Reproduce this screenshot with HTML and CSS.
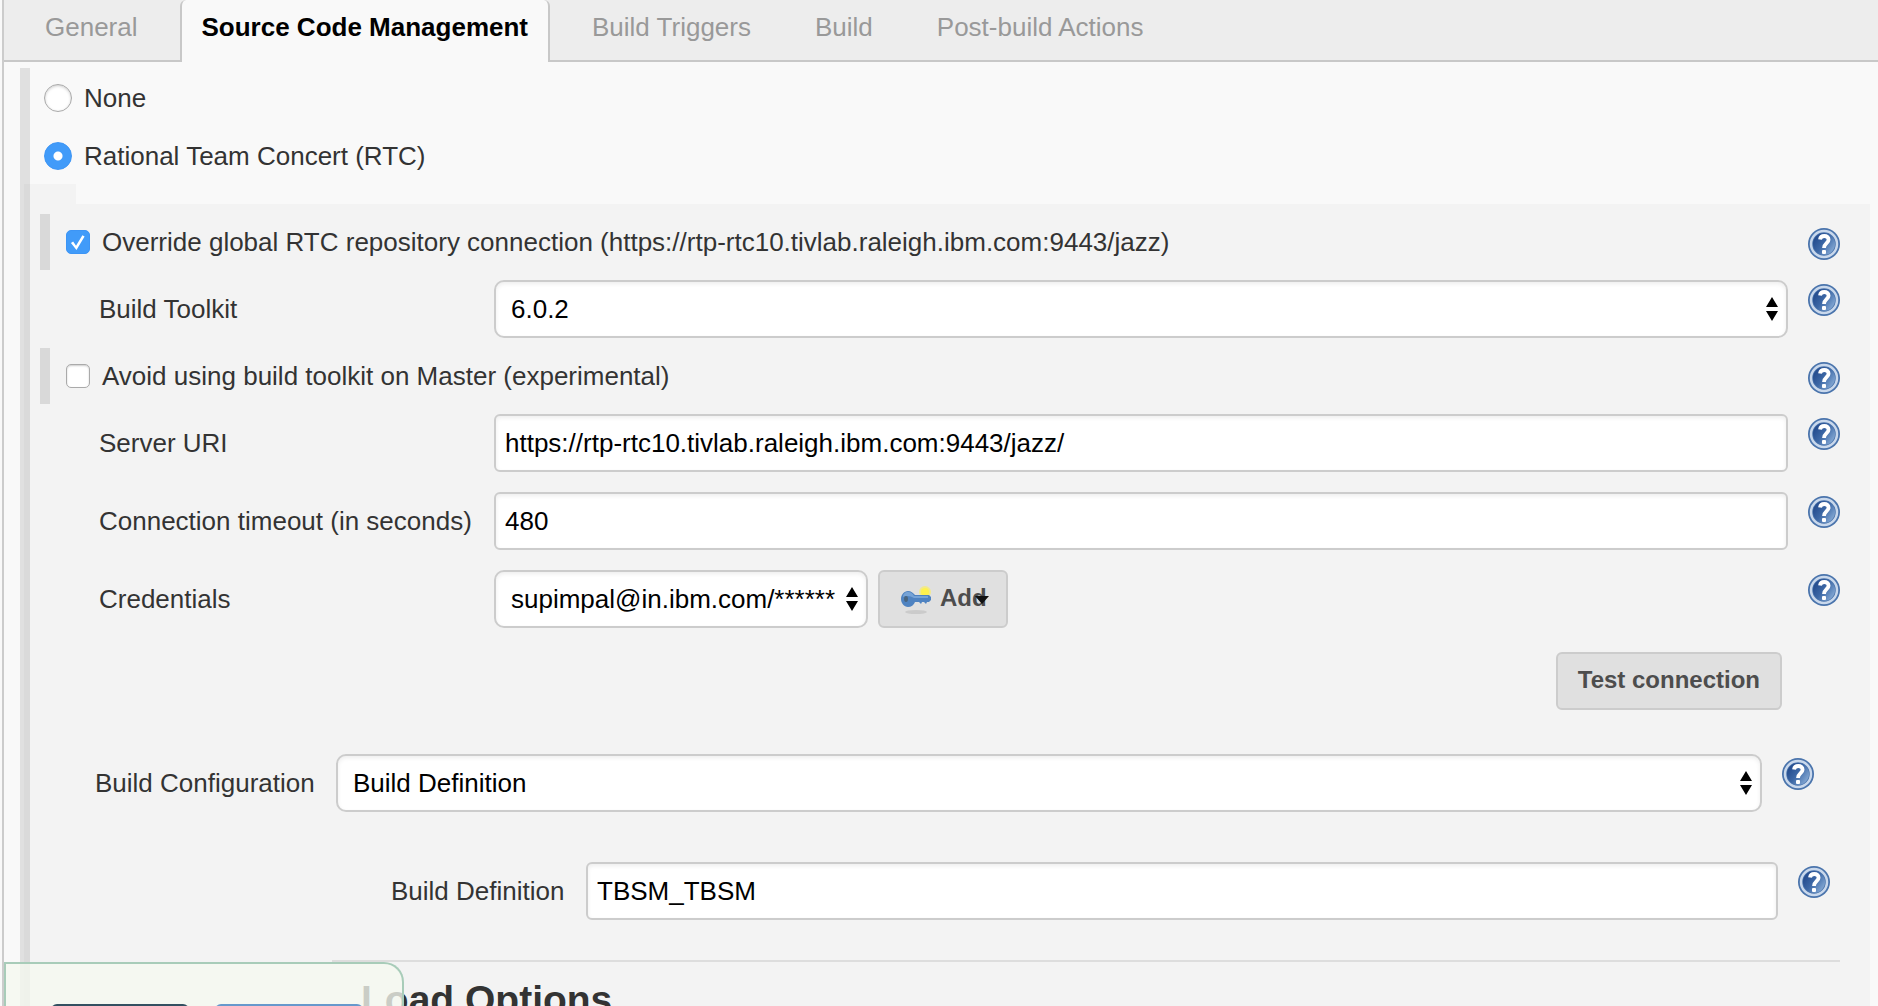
FILE: index.html
```html
<!DOCTYPE html>
<html lang="en">
<head>
<meta charset="utf-8">
<title>Job configuration</title>
<link rel="stylesheet" href="styles.css">
</head>
<body>
<svg class="defs" aria-hidden="true">
  <defs>
    <linearGradient id="disc" x1="0" y1="0.2" x2="1" y2="0.9">
      <stop offset="0" stop-color="#20478a"/>
      <stop offset="0.45" stop-color="#3d68a6"/>
      <stop offset="1" stop-color="#91b4dc"/>
    </linearGradient>
    <symbol id="help" viewBox="0 0 32 32">
      <circle cx="16" cy="16" r="16" fill="#4a74ac"/>
      <circle cx="16" cy="16" r="13" fill="none" stroke="#c9d8ec" stroke-width="2.500"/>
      <circle cx="16" cy="16" r="11" fill="url(#disc)"/>
      <path d="M12 11.5C12.4 9 14.2 8 16.3 8c2.6 0 4.3 1.500 4.300 3.700 0 3.400-4.600 3.600-4.600 8.300" fill="none" stroke="#fff" stroke-width="3.800"/>
      <rect x="14" y="22" width="4" height="4" rx="1" fill="#fff"/>
    </symbol>
    <symbol id="arrows" viewBox="0 0 12 24">
      <path d="M6 0l6 10H0zM0 14h12L6 24z" fill="#000"/>
    </symbol>
  </defs>
</svg>
<main class="config">
  <nav class="tabs">
    <a class="tab tab-first" href="#general">General</a>
    <a class="tab tab-active" href="#scm">Source Code Management</a>
    <a class="tab tab-after" href="#triggers">Build Triggers</a>
    <a class="tab" href="#build">Build</a>
    <a class="tab" href="#post">Post-build Actions</a>
  </nav>
  <form class="section" id="scm">
    <div class="choices">
      <label class="choice"><input class="radio" type="radio" name="scm"><span>None</span></label>
      <label class="choice"><input class="radio" type="radio" name="scm" checked><span>Rational Team Concert (RTC)</span></label>
    </div>
    <div class="notch"></div>
    <div class="panel">
      <div class="toggle-row">
        <label class="toggle"><input class="check" type="checkbox" checked><span>Override global RTC repository connection (https://rtp-rtc10.tivlab.raleigh.ibm.com:9443/jazz)</span></label>
        <a class="help" href="#help" aria-label="Help"><svg><use href="#help"/></svg></a>
      </div>
      <div class="row">
        <label class="label" for="toolkit">Build Toolkit</label>
        <div class="picker grow">
          <select class="select" id="toolkit"><option>6.0.2</option></select>
          <svg class="arrows" aria-hidden="true"><use href="#arrows"/></svg>
        </div>
        <a class="help" href="#help" aria-label="Help"><svg><use href="#help"/></svg></a>
      </div>
      <div class="toggle-row">
        <label class="toggle"><input class="check" type="checkbox"><span>Avoid using build toolkit on Master (experimental)</span></label>
        <a class="help" href="#help" aria-label="Help"><svg><use href="#help"/></svg></a>
      </div>
      <div class="rows">
        <div class="row">
          <label class="label" for="uri">Server URI</label>
          <input class="text grow" id="uri" type="text" value="https://rtp-rtc10.tivlab.raleigh.ibm.com:9443/jazz/">
          <a class="help" href="#help" aria-label="Help"><svg><use href="#help"/></svg></a>
        </div>
        <div class="row">
          <label class="label" for="timeout">Connection timeout (in seconds)</label>
          <input class="text grow" id="timeout" type="text" value="480">
          <a class="help" href="#help" aria-label="Help"><svg><use href="#help"/></svg></a>
        </div>
        <div class="row">
          <label class="label" for="credentials">Credentials</label>
          <div class="credentials grow">
            <div class="picker">
              <select class="select select-short" id="credentials"><option>supimpal@in.ibm.com/******</option></select>
              <svg class="arrows" aria-hidden="true"><use href="#arrows"/></svg>
            </div>
            <button class="button add" type="button">
              <svg class="key" viewBox="0 0 32 32" aria-hidden="true">
                <ellipse cx="16" cy="28" rx="11" ry="2" fill="#cbcbcb"/>
                <circle cx="25" cy="8" r="6" fill="#f1e98d"/>
                <circle cx="25" cy="8" r="4" fill="#fff24e"/>
                <path d="M8 7c3 0 5 2 7 4h14l2 2v3l-2 2h-2l-1 2-2-2h-2l-1 2-2-2h-4c-1 3-4 5-7 5-4 0-7-4-7-8s3-8 7-8z" fill="#4f83c1"/>
                <path d="M8 8c3 0 5 2 6 4h14v2H14c-3-2-8-3-11-1 0-3 2-5 5-5z" fill="#76a3d6"/>
                <ellipse cx="6" cy="15" rx="2" ry="3" fill="#49657f"/>
              </svg>
              <span>Add</span>
              <svg class="caret" viewBox="0 0 14 8" aria-hidden="true"><path d="M0 0h14L7 8z" fill="#111"/></svg>
            </button>
          </div>
          <a class="help" href="#help" aria-label="Help"><svg><use href="#help"/></svg></a>
        </div>
      </div>
      <div class="actions"><button class="button" type="button">Test connection</button></div>
      <div class="row configuration">
        <label class="label" for="configuration">Build Configuration</label>
        <div class="picker grow">
          <select class="select" id="configuration"><option>Build Definition</option></select>
          <svg class="arrows" aria-hidden="true"><use href="#arrows"/></svg>
        </div>
        <a class="help" href="#help" aria-label="Help"><svg><use href="#help"/></svg></a>
      </div>
      <div class="row definition">
        <label class="label" for="definition">Build Definition</label>
        <input class="text grow" id="definition" type="text" value="TBSM_TBSM">
        <a class="help" href="#help" aria-label="Help"><svg><use href="#help"/></svg></a>
      </div>
      <section class="load">
        <h2 class="heading">Load Options</h2>
      </section>
    </div>
  </form>
</main>
<div class="save-bar">
  <button class="save" type="button" aria-label="Save"></button>
  <button class="apply" type="button" aria-label="Apply"></button>
</div>
</body>
</html>
```

FILE: styles.css
```css
* { box-sizing: border-box; }

body {
  margin: 0;
  height: 100vh;
  overflow: hidden;
  background: #f9f9f9;
  color: #333;
  font: 26px/30px "Liberation Sans", Arial, sans-serif;
}

input, select, button { margin: 0; font: inherit; }

.defs { position: absolute; width: 0; height: 0; }

.config {
  min-height: 100vh;
  margin-left: 2px;
  border-left: 2px solid #ccc;
}

/* Tabs */
.tabs {
  display: flex;
  height: 62px;
  background: #ededed;
  box-shadow: inset 0 -2px #c8c8c8;
}
.tab {
  padding: 12px 32px 0;
  color: #999;
  text-decoration: none;
}
.tab-first { padding: 12px 42px 0 41px; }
.tab-after { padding-left: 42px; }
.tab-active {
  padding: 12px 20px 0;
  border: solid #c8c8c8;
  border-width: 0 2px;
  border-radius: 6px 6px 0 0;
  background: #f9f9f9;
  color: #000;
  font-weight: bold;
}

/* Section */
.section {
  margin: 6px 8px 0 16px;
  background: linear-gradient(#e0e0e0, #e0e0e0) 0 0 / 10px 100% no-repeat;
}
.choices {
  display: flex;
  flex-direction: column;
  gap: 28px;
  padding: 15px 0 13px 24px;
}
.choice { display: flex; align-items: center; gap: 12px; }
.radio {
  width: 28px;
  height: 28px;
  margin: 1px 0;
  appearance: none;
  border: 1px solid #aaa;
  border-radius: 50%;
  background: #fff;
  box-shadow: inset 0 1px 3px #ccc;
}
.radio:checked {
  border-color: #3d95f5;
  background: radial-gradient(circle, #fff 4px, #419bf9 5px);
  box-shadow: none;
}
.notch {
  width: 52px;
  height: 20px;
  margin-left: 4px;
  background: rgba(0, 0, 0, 0.024);
}
.panel {
  margin-left: 4px;
  padding: 10px 30px 80px 16px;
  background: rgba(0, 0, 0, 0.024);
}

/* Rows */
.toggle-row {
  display: flex;
  align-items: center;
  justify-content: space-between;
  height: 56px;
  margin-bottom: 10px;
  padding-left: 16px;
  border-left: 10px solid #d9d9d9;
}
.toggle { display: flex; align-items: center; gap: 12px; }
.check {
  width: 24px;
  height: 24px;
  appearance: none;
  border: 1px solid #aaa;
  border-radius: 5px;
  background: #fff;
  box-shadow: inset 0 1px 2px #ccc;
}
.check:checked {
  border-color: #3d95f5;
  background: #419bf9;
  box-shadow: none;
}
.check:checked::before {
  content: "";
  display: block;
  width: 22px;
  height: 22px;
  background: #fff;
  clip-path: polygon(18% 54%, 28% 48%, 41% 67%, 70% 19%, 80% 25%, 43% 86%);
}
.row {
  display: flex;
  align-items: center;
  margin-bottom: 10px;
  padding-left: 59px;
}
.rows { display: flex; flex-direction: column; gap: 10px; }
.label { flex: 0 0 395px; }
.grow { flex: 1; min-width: 0; }
.help {
  flex: none;
  width: 32px;
  height: 32px;
}
.row .help { align-self: flex-start; margin: 4px 0 0 20px; }
.toggle-row .help { margin-top: 4px; }
.help svg { display: block; width: 32px; height: 32px; }

/* Controls */
.text, .select {
  width: 100%;
  height: 58px;
  border: 2px solid #ccc;
  background: #fff;
  box-shadow: inset 0 2px 4px #eee;
  color: #000;
}
.text { padding: 0 9px; border-radius: 6px; }
.select {
  display: block;
  padding: 0 26px 0 15px;
  appearance: none;
  border-radius: 10px;
}
.select-short { width: 374px; }
.picker { position: relative; }
.arrows {
  position: absolute;
  top: 17px;
  right: 10px;
  width: 12px;
  height: 24px;
  pointer-events: none;
}
.credentials { display: flex; gap: 10px; }
.button {
  height: 58px;
  padding: 0 20px 2px;
  border: 2px solid #ccc;
  border-radius: 6px;
  background: #e0e0e0;
  color: #4d4d4d;
  font-size: 24px;
  font-weight: bold;
}
.add { position: relative; display: flex; align-items: center; width: 130px; gap: 8px; }
.key { flex: none; width: 32px; height: 32px; margin-top: 4px; }
.caret { position: absolute; top: 24px; right: 17px; width: 14px; height: 8px; }
.actions {
  display: flex;
  justify-content: flex-end;
  margin: 14px 58px 44px 0;
}

/* Build configuration */
.configuration { margin: 0 26px 50px 0; padding-left: 55px; }
.configuration .label { flex-basis: 241px; }
.definition { margin: 0 10px 40px 0; padding-left: 351px; }
.definition .label { flex-basis: 195px; }
.load {
  margin-left: 292px;
  padding: 16px 0 0 29px;
  border-top: 2px solid #ddd;
}
.heading {
  margin: 0;
  font-size: 39px;
  line-height: 44px;
}

/* Save bar */
.save-bar {
  position: fixed;
  bottom: 0;
  left: 4px;
  display: flex;
  gap: 26px;
  width: 400px;
  height: 44px;
  padding: 40px 39px 0 45px;
  overflow: hidden;
  border: 2px solid #a8ccb9;
  border-bottom: 0;
  border-radius: 0 20px 0 0;
  background: rgba(245, 249, 240, 0.78);
}
.save, .apply {
  height: 58px;
  flex: none;
  border: 0;
  border-radius: 6px;
}
.save { width: 138px; background: #335061; }
.apply { width: 148px; background: #6699cc; }
```
